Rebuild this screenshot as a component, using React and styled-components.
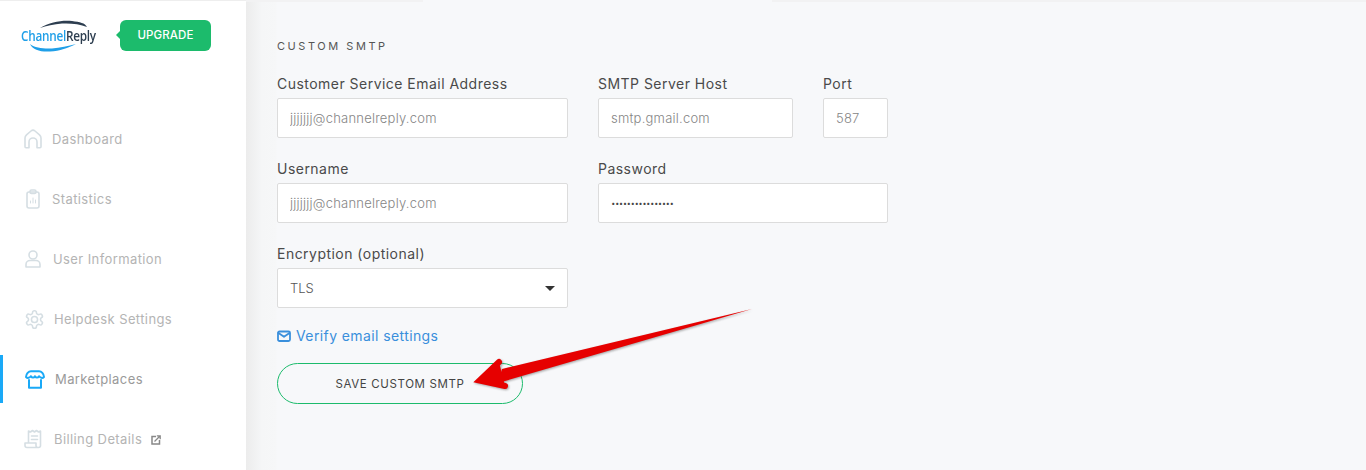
import React from "react";
import styled, { createGlobalStyle } from "styled-components";

const FONT = `Inter, "Open Sans", "Liberation Sans", sans-serif`;

const Global = createGlobalStyle`
  html, body {
    margin: 0;
    height: 100%;
    overflow: hidden;
    background: #f7f8fa;
    font-family: ${FONT};
  }
  * { box-sizing: border-box; }
`;

const Page = styled.div`
  position: relative;
  display: flex;
  width: 1366px;
  height: 470px;
  overflow: hidden;
`;

const Sidebar = styled.aside`
  width: 246px;
  flex: none;
  background: #fff;
  border-top: 1px solid #eeeeee;
`;

const Brand = styled.div`
  display: flex;
  align-items: flex-start;
  height: 108px;
  padding: 19px 0 0 20px;
`;

const Logo = styled.div`
  position: relative;
  width: 78px;
  height: 36px;
  margin-right: 22px;
  flex: none;
`;

const LogoSwoosh = styled.svg`
  position: absolute;
  left: 0;
  top: 0;
`;

const LogoText = styled.div`
  position: absolute;
  left: 1px;
  top: 7px;
  font-family: "Open Sans", sans-serif;
  font-size: 14px;
  font-weight: 600;
  line-height: 18px;
  letter-spacing: -0.3px;
  transform: scaleX(0.84);
  transform-origin: left;
  white-space: nowrap;
  color: #2d3e50;

  span {
    color: #1f9fe8;
  }
`;

const Upgrade = styled.div`
  position: relative;
  width: 91px;
  height: 31px;
  background: #1cbb6c;
  border-radius: 6px;
  color: #fff;
  font-size: 11.5px;
  font-weight: 500;
  line-height: 31px;
  text-align: center;
  letter-spacing: 0.1px;

  &:before {
    content: "";
    position: absolute;
    left: -4px;
    top: 11px;
    border: 4px solid transparent;
    border-left: 0;
    border-right-color: #1cbb6c;
  }
`;

const Nav = styled.nav`
  display: flex;
  flex-direction: column;
`;

const NavItem = styled.div`
  position: relative;
  display: flex;
  align-items: center;
  height: 60px;
  padding-left: ${(p) => p.$left}px;
  font-size: 13px;
  letter-spacing: 0.4px;
  color: ${(p) => (p.$active ? "#9a9a9a" : "#b4b4b4")};

  &:before {
    content: "";
    display: ${(p) => (p.$active ? "block" : "none")};
    position: absolute;
    left: 0;
    top: 6px;
    width: 3px;
    height: 48px;
    background: #1aa9f7;
  }
`;

const NavIcon = styled.svg`
  flex: none;
  margin-right: ${(p) => p.$gap}px;
`;

const ExternalIcon = styled.svg`
  margin-left: 9px;
  margin-top: 2px;
`;

const Main = styled.main`
  flex: 1;
  padding: 39px 0 0 31px;
  background:
    linear-gradient(#f2f2f3, #f2f2f3) 0 0 / 177px 2px no-repeat,
    linear-gradient(#f2f2f3, #f2f2f3) 526px 0 / 600px 2px no-repeat,
    linear-gradient(to right, #ececec 0, #f5f6f7 16px, #f6f7f8 30px, #f7f8fa 31px);
`;

const Title = styled.h2`
  margin: 0 0 21px;
  font-size: 11px;
  font-weight: 400;
  line-height: 15px;
  letter-spacing: 2.55px;
  color: #555;
`;

const Form = styled.div`
  display: grid;
  grid-template-columns: 291px 195px 65px;
  column-gap: 30px;
  row-gap: 22px;
  width: 611px;
`;

const Field = styled.label`
  display: block;
  grid-column: ${(p) => p.$span || "auto"};
`;

const FieldLabel = styled.div`
  height: 23px;
  font-size: 14px;
  line-height: 17px;
  letter-spacing: 0.47px;
  color: #4a4a4a;
`;

const Input = styled.input`
  display: block;
  width: 100%;
  height: 40px;
  padding: 0 12px;
  border: 1px solid #dcdcdc;
  border-radius: 2px;
  background: #fff;
  outline: none;
  font-family: ${FONT};
  font-size: 13px;
  font-weight: 300;
  letter-spacing: 0.22px;
  color: #858585;

  &[type="password"] {
    font-size: 8px;
    letter-spacing: -0.6px;
    color: #444;
  }
`;

const SelectWrap = styled.div`
  position: relative;

  &:after {
    content: "";
    position: absolute;
    right: 13px;
    top: 18px;
    border: 5px solid transparent;
    border-bottom: 0;
    border-top-color: #333;
    pointer-events: none;
  }
`;

const Select = styled.select`
  display: block;
  width: 100%;
  height: 40px;
  padding: 0 12px;
  border: 1px solid #dcdcdc;
  border-radius: 2px;
  background: #fff;
  appearance: none;
  outline: none;
  font-family: ${FONT};
  font-size: 13px;
  font-weight: 300;
  color: #555;
`;

const VerifyLink = styled.a`
  display: flex;
  align-items: center;
  gap: 5px;
  height: 20px;
  margin: 18px 0 17px;
  font-size: 14px;
  line-height: 18px;
  letter-spacing: 0.4px;
  color: #3a8fdc;
`;

const SaveButton = styled.button`
  display: block;
  width: 246px;
  height: 41px;
  padding: 0;
  border: 1px solid #1cbb6c;
  border-radius: 21px;
  background: transparent;
  font-family: ${FONT};
  font-size: 11.5px;
  font-weight: 400;
  letter-spacing: 0.62px;
  color: #444;
`;

const Arrow = styled.svg`
  position: absolute;
  left: 460px;
  top: 295px;
  pointer-events: none;
  filter: drop-shadow(1px 1px 1px rgba(60, 60, 60, 0.45));
`;

const stroke = { fill: "none", stroke: "#d5dee3", strokeWidth: 1.6, strokeLinecap: "round", strokeLinejoin: "round" };

const HomeIcon = () => (
  <NavIcon $gap={10} width="18" height="20" viewBox="0 0 18 20" {...stroke}>
    <path d="M1 9C1 7.500 1.500 6.700 2.500 5.800L7 2C8.200 1 9.800 1 11 2L15.500 5.800C16.500 6.700 17 7.500 17 9V17.800a1 1 0 0 1-1 1H13V13a4 4 0 0 0-8 0v5.800H2a1 1 0 0 1-1-1Z" />
  </NavIcon>
);

const ClipboardIcon = () => (
  <NavIcon $gap={12} width="14" height="20" viewBox="0 0 14 20" {...stroke}>
    <rect x="1" y="3" width="12" height="16" rx="2" />
    <rect x="4" y="1" width="6" height="3.500" rx="1.500" />
    <path d="M4.500 14v-2M7 14V9M9.500 14v-3" strokeWidth="1" />
  </NavIcon>
);

const UserIcon = () => (
  <NavIcon $gap={12} width="16" height="18" viewBox="0 0 16 18" {...stroke}>
    <circle cx="8" cy="5" r="4" />
    <path d="M1 17v-2.500C1 12 3 10.500 5 10.500h6c2 0 4 1.500 4 4V17Z" />
  </NavIcon>
);

const GearIcon = () => (
  <NavIcon $gap={9} width="21" height="21" viewBox="0 0 24 24" fill="none" stroke="#d5dee3" strokeWidth="1.800" strokeLinecap="round" strokeLinejoin="round">
    <path d="M12.220 2h-.440a2 2 0 0 0-2 2v.180a2 2 0 0 1-1 1.730l-.430.250a2 2 0 0 1-2 0l-.150-.080a2 2 0 0 0-2.730.730l-.220.380a2 2 0 0 0 .730 2.730l.150.100a2 2 0 0 1 1 1.720v.510a2 2 0 0 1-1 1.740l-.150.090a2 2 0 0 0-.730 2.730l.220.380a2 2 0 0 0 2.730.730l.150-.080a2 2 0 0 1 2 0l.430.250a2 2 0 0 1 1 1.730V20a2 2 0 0 0 2 2h.440a2 2 0 0 0 2-2v-.180a2 2 0 0 1 1-1.730l.430-.250a2 2 0 0 1 2 0l.150.080a2 2 0 0 0 2.730-.730l.220-.390a2 2 0 0 0-.730-2.730l-.150-.080a2 2 0 0 1-1-1.740v-.500a2 2 0 0 1 1-1.740l.150-.090a2 2 0 0 0 .730-2.730l-.220-.380a2 2 0 0 0-2.730-.730l-.150.080a2 2 0 0 1-2 0l-.430-.250a2 2 0 0 1-1-1.730V4a2 2 0 0 0-2-2z" />
    <circle cx="12" cy="12" r="3.500" />
  </NavIcon>
);

const StoreIcon = () => (
  <NavIcon $gap={10} width="20" height="19" viewBox="0 0 20 19" fill="none" stroke="#1aa9f7" strokeWidth="2" strokeLinejoin="round" strokeLinecap="round">
    <path d="M6 1.200H14C16.500 1.200 18.800 4 19 7C17.500 8.500 15.500 8 14 6.200C13 8 11 8 10 6.200C9 8 7 8 6 6.200C4.500 8 2.500 8.500 1 7C1.200 4 3.500 1.200 6 1.200Z" />
    <path d="M4 10V17.700H16V10" />
  </NavIcon>
);

const ReceiptIcon = () => (
  <NavIcon $gap={10} width="20" height="20" viewBox="0 0 20 20" {...stroke}>
    <path d="M4.500 14V2l2 1 2-1.500 2 1.500 2-1.500 2 1.500 2-1V16.500a2 2 0 0 1-2 2H3a2 2 0 0 1-2-2V14h11v2.500a2 2 0 0 0 2 2" />
    <path d="M7.500 7h6M7.500 10.500h6" />
  </NavIcon>
);

const MailIcon = () => (
  <svg width="14" height="14" viewBox="0 0 14 14" fill="none" stroke="#3a8fdc" strokeWidth="1.800" strokeLinejoin="round" strokeLinecap="round">
    <rect x="1" y="2.500" width="12" height="9.500" rx="1.500" />
    <path d="M1.500 4 7 7.800 12.500 4" />
  </svg>
);

const navItems = [
  { label: "Dashboard", left: 24, icon: <HomeIcon /> },
  { label: "Statistics", left: 26, icon: <ClipboardIcon /> },
  { label: "User Information", left: 25, icon: <UserIcon /> },
  { label: "Helpdesk Settings", left: 24, icon: <GearIcon /> },
  { label: "Marketplaces", left: 25, icon: <StoreIcon />, active: true },
  { label: "Billing Details", left: 24, icon: <ReceiptIcon />, external: true },
];

const App = () => {
  return (
    <Page>
      <Global />
      <Sidebar>
        <Brand>
          <Logo>
            <LogoSwoosh width="78" height="36" viewBox="0 0 78 36">
              <path d="M20 8C30 2 42 0 52 1 60 2 65 3 67 7 60 4 50 3 42 3.500 34 4 26 6 20 8Z" fill="#2d3e50" />
              <path d="M10 24C15 28 24 29 32 28.500 40 28 48 26 56 24 48 28 40 31 30 31.500 20 32 13 30 10 24Z" fill="#1f9fe8" />
            </LogoSwoosh>
            <LogoText>
              <span>Channel</span>Reply
            </LogoText>
          </Logo>
          <Upgrade>UPGRADE</Upgrade>
        </Brand>
        <Nav>
          {navItems.map((item) => (
            <NavItem key={item.label} $left={item.left} $active={item.active}>
              {item.icon}
              {item.label}
              {item.external && (
                <ExternalIcon width="10" height="10" viewBox="0 0 10 10" fill="none" stroke="#888" strokeWidth="1.500">
                  <path d="M5 1.500H1v7.500h7.500V5" />
                  <path d="M3.500 6.500 9 1M5.800.8h3.400v3.400" strokeWidth="1.300" />
                </ExternalIcon>
              )}
            </NavItem>
          ))}
        </Nav>
      </Sidebar>
      <Main>
        <Title>CUSTOM SMTP</Title>
        <Form>
          <Field>
            <FieldLabel>Customer Service Email Address</FieldLabel>
            <Input defaultValue="jjjjjjj@channelreply.com" />
          </Field>
          <Field>
            <FieldLabel>SMTP Server Host</FieldLabel>
            <Input defaultValue="smtp.gmail.com" />
          </Field>
          <Field>
            <FieldLabel>Port</FieldLabel>
            <Input defaultValue="587" />
          </Field>
          <Field>
            <FieldLabel>Username</FieldLabel>
            <Input defaultValue="jjjjjjj@channelreply.com" />
          </Field>
          <Field $span="span 2">
            <FieldLabel>Password</FieldLabel>
            <Input type="password" defaultValue="jjjjjjjjjjjjjjjj" />
          </Field>
          <Field>
            <FieldLabel>Encryption (optional)</FieldLabel>
            <SelectWrap>
              <Select defaultValue="TLS">
                <option>TLS</option>
                <option>SSL</option>
              </Select>
            </SelectWrap>
          </Field>
        </Form>
        <VerifyLink>
          <MailIcon />
          Verify email settings
        </VerifyLink>
        <SaveButton>SAVE CUSTOM SMTP</SaveButton>
      </Main>
      <Arrow width="300" height="110" viewBox="0 0 300 110">
        <path d="M292 14 42 74 38 88Z" fill="#e60000" />
        <path
          d="M39 67 19.500 85.500 45 91"
          fill="#e60000"
          stroke="#e60000"
          strokeWidth="6"
          strokeLinecap="round"
          strokeLinejoin="miter"
        />
      </Arrow>
    </Page>
  );
};

export default App;
